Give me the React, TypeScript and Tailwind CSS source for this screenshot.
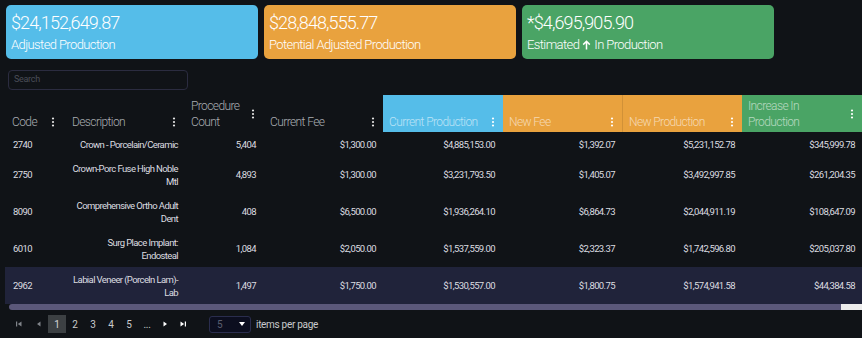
import React from 'react';

type Col = {
  key: string;
  label: string[];
  bg?: string;
  head: string;
  divider?: boolean;
  pl: string;
};

const cols: Col[] = [
  { key: 'code', label: ['Code'], head: 'text-[#a9adb2]', pl: 'pl-[7px]' },
  { key: 'desc', label: ['Description'], head: 'text-[#a9adb2]', pl: 'pl-[9px]' },
  { key: 'count', label: ['Procedure', 'Count'], head: 'text-[#a9adb2]', pl: 'pl-[7px]' },
  { key: 'fee', label: ['Current Fee'], head: 'text-[#a9adb2]', pl: 'pl-[7px]' },
  { key: 'cp', label: ['Current Production'], bg: 'bg-[#55bde9]', head: 'text-white/60', pl: 'pl-[6px]' },
  { key: 'nf', label: ['New Fee'], bg: 'bg-[#e9a23e]', head: 'text-white/60', pl: 'pl-[6px]' },
  { key: 'np', label: ['New Production'], bg: 'bg-[#e9a23e]', head: 'text-white/60', divider: true, pl: 'pl-[6px]' },
  { key: 'inc', label: ['Increase In', 'Production'], bg: 'bg-[#4aa465]', head: 'text-white/60', pl: 'pl-[6px]' },
];

type Row = {
  code: string;
  desc: string[];
  count: string;
  fee: string;
  cp: string;
  nf: string;
  np: string;
  inc: string;
  active?: boolean;
};

const rows: Row[] = [
  { code: '2740', desc: ['Crown - Porcelain/Ceramic'], count: '5,404', fee: '$1,300.00', cp: '$4,885,153.00', nf: '$1,392.07', np: '$5,231,152.78', inc: '$345,999.78' },
  { code: '2750', desc: ['Crown-Porc Fuse High Noble', 'Mtl'], count: '4,893', fee: '$1,300.00', cp: '$3,231,793.50', nf: '$1,405.07', np: '$3,492,997.85', inc: '$261,204.35' },
  { code: '8090', desc: ['Comprehensive Ortho Adult', 'Dent'], count: '408', fee: '$6,500.00', cp: '$1,936,264.10', nf: '$6,864.73', np: '$2,044,911.19', inc: '$108,647.09' },
  { code: '6010', desc: ['Surg Place Implant:', 'Endosteal'], count: '1,084', fee: '$2,050.00', cp: '$1,537,559.00', nf: '$2,323.37', np: '$1,742,596.80', inc: '$205,037.80' },
  { code: '2962', desc: ['Labial Veneer (Porceln Lam)-', 'Lab'], count: '1,497', fee: '$1,750.00', cp: '$1,530,557.00', nf: '$1,800.75', np: '$1,574,941.58', inc: '$44,384.58', active: true },
];

const gridCols = 'grid grid-cols-[58px_121px_79px_120px_120px_119px_120px_120px]';

function Dots({ className }: { className: string }) {
  return (
    <svg width="4" height="10" viewBox="0 0 4 10" className={className}>
      <circle cx="2" cy="1.5" r="1.1" fill="currentColor" />
      <circle cx="2" cy="5" r="1.1" fill="currentColor" />
      <circle cx="2" cy="8.5" r="1.1" fill="currentColor" />
    </svg>
  );
}

function StatCard({ amount, label, color }: { amount: string; label: React.ReactNode; color: string }) {
  return (
    <div className={`w-[252px] h-[54px] rounded-[5px] px-[5px] pt-[7px] text-white ${color}`}>
      <div className="text-[18px] leading-[22px] font-light tracking-[-0.9px]">{amount}</div>
      <div className="mt-[3px] text-[13px] leading-[16px] font-light tracking-[-0.6px] flex items-center">{label}</div>
    </div>
  );
}

function PagerIcon({ dir, bar, on }: { dir: 'l' | 'r'; bar?: boolean; on?: boolean }) {
  const c = on ? '#ffffff' : '#80848a';
  return (
    <div className="w-[18px] h-[18px] flex items-center justify-center">
      <svg width="6" height="6" viewBox="0 0 6 6">
        {dir === 'l' ? (
          <>
            {bar && <rect x="0" y="0.5" width="1.2" height="5" fill={c} />}
            <polygon points={bar ? '5.5,0.5 5.5,5.5 1.8,3' : '4.5,0.5 4.5,5.5 1,3'} fill={c} />
          </>
        ) : (
          <>
            <polygon points={bar ? '0.5,0.5 0.5,5.5 4.2,3' : '1.5,0.5 1.5,5.5 5,3'} fill={c} />
            {bar && <rect x="4.8" y="0.5" width="1.2" height="5" fill={c} />}
          </>
        )}
      </svg>
    </div>
  );
}

export default function App() {
  return (
    <div className="w-[862px] h-[338px] overflow-hidden bg-[#101317] font-[family-name:Roboto,sans-serif]">
      {/* Summary cards */}
      <div className="flex gap-[6px] pl-[6px] pt-[5px]">
        <StatCard amount="$24,152,649.87" label="Adjusted Production" color="bg-[#55bde9]" />
        <StatCard amount="$28,848,555.77" label="Potential Adjusted Production" color="bg-[#e9a23e]" />
        <StatCard
          amount="*$4,695,905.90"
          color="bg-[#4aa465]"
          label={
            <>
              Estimated
              <svg width="9" height="10" viewBox="0 0 9 10" className="mx-[3px]">
                <path d="M4.5 9.5V1.5M1.2 4.6L4.5 1.3L7.8 4.6" stroke="white" strokeWidth="1.5" fill="none" />
              </svg>
              In Production
            </>
          }
        />
      </div>

      {/* Search */}
      <div className="ml-[8px] mt-[11px] w-[180px] h-[20px] rounded-[4px] border border-[#2b2c40] flex items-center pl-[5px]">
        <span className="text-[9px] text-[#4b4e57] tracking-[-0.3px]">Search</span>
      </div>

      {/* Table */}
      <div className="ml-[5px] mt-[5px] overflow-hidden">
        <div className={`${gridCols} h-[37px]`}>
          {cols.map((c) => (
            <div
              key={c.key}
              className={`flex flex-col justify-end pr-[8px] pb-[2px] ${c.pl} ${c.bg ?? ''} ${c.divider ? 'border-l border-black/10' : ''}`}
            >
              <div className="flex items-center justify-between">
                <div className={`text-[12px] leading-[16px] font-light tracking-[-0.6px] ${c.head}`}>
                  {c.label.map((l) => (
                    <div key={l}>{l}</div>
                  ))}
                </div>
                <Dots className={c.bg ? 'text-white' : 'text-[#e6e6e6]'} />
              </div>
            </div>
          ))}
        </div>

        {rows.map((r) => (
          <div
            key={r.code}
            className={`${gridCols} text-[9.5px] leading-[13px] tracking-[-0.6px] text-[#dcdde0] ${r.active ? 'bg-[#20233a]' : ''}`}
          >
            <div className="flex items-center pl-[8px] py-[5.5px]">{r.code}</div>
            <div className="flex flex-col justify-center items-end pr-[6px] py-[5.5px] whitespace-nowrap">
              {r.desc.map((d) => (
                <div key={d}>{d}</div>
              ))}
            </div>
            <div className="flex items-center justify-end pr-[7px]">{r.count}</div>
            <div className="flex items-center justify-end pr-[7px]">{r.fee}</div>
            <div className="flex items-center justify-end pr-[8px]">{r.cp}</div>
            <div className="flex items-center justify-end pr-[7px]">{r.nf}</div>
            <div className="flex items-center justify-end pr-[7px]">{r.np}</div>
            <div className="flex items-center justify-end pr-[7px]">{r.inc}</div>
          </div>
        ))}

        {/* Horizontal scrollbar */}
        <div className="flex h-[6px] ml-[4px]">
          <div className="flex-1 rounded-l-full rounded-r-[3px] bg-[#5b587a]" />
          <div className="w-[21px] bg-[#ececec]" />
        </div>
      </div>

      {/* Pager */}
      <div className="flex items-center pl-[10px] mt-[5px] text-[10px] text-[#c9cbcd] tracking-[-0.3px]">
        <PagerIcon dir="l" bar />
        <div className="w-[2px]" />
        <PagerIcon dir="l" />
        <div className="w-[18px] h-[18px] flex items-center justify-center bg-[#3c4043] text-[#d6d6d6]">1</div>
        {['2', '3', '4', '5', '...'].map((p) => (
          <div key={p} className="w-[18px] h-[18px] flex items-center justify-center">
            {p}
          </div>
        ))}
        <PagerIcon dir="r" on />
        <PagerIcon dir="r" bar on />
        <div className="ml-[17px] w-[42px] h-[17px] rounded-[3px] border border-[#2a2d4e] bg-[#0c0e1f] flex items-center justify-between pl-[7px] pr-[5px]">
          <span className="text-[#5b5e70]">5</span>
          <svg width="6" height="4" viewBox="0 0 6 4">
            <polygon points="0,0 6,0 3,4" fill="white" />
          </svg>
        </div>
        <span className="ml-[5px]">items per page</span>
      </div>
    </div>
  );
}
